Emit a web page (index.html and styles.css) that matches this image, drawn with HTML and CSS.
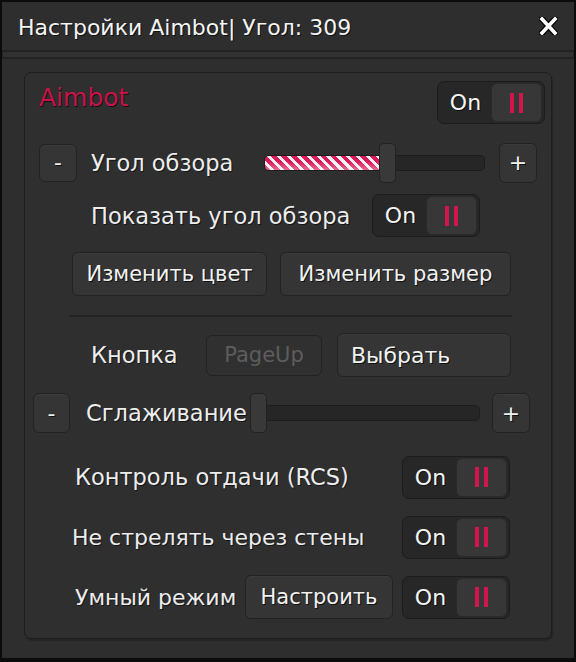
FILE: index.html
```html
<!DOCTYPE html>
<html lang="ru">
<head>
    <meta charset="UTF-8">
    <meta name="viewport" content="width=device-width, initial-scale=1.0">
    <title>Настройки Aimbot</title>
    <link rel="stylesheet" href="styles.css">
</head>
<body>
    <div class="window">
        <div class="titlebar">
            <span class="title">Настройки Aimbot| Угол: 309</span>
            <span class="close">
                <svg width="19" height="18" viewBox="0 0 19 18">
                    <path d="M3 2 L16 16 M16 2 L3 16" stroke="#000" stroke-width="6" stroke-linecap="square"/>
                    <path d="M3 2 L16 16 M16 2 L3 16" stroke="#fff" stroke-width="3.6" stroke-linecap="square"/>
                </svg>
            </span>
        </div>

        <div class="content">
            <div class="group">
                <div class="row row-head">
                    <span class="group-title">Aimbot</span>
                    <div class="toggle">
                        <span class="toggle-label">On</span>
                        <span class="knob"><i></i><i></i></span>
                    </div>
                </div>

                <div class="row row-fov">
                    <button class="btn btn-sq">-</button>
                    <span class="label">Угол обзора</span>
                    <div class="slider">
                        <div class="fill" style="width: 52%"></div>
                        <div class="thumb" style="left: 52%"></div>
                    </div>
                    <button class="btn btn-sq">+</button>
                </div>

                <div class="row row-show">
                    <span class="label">Показать угол обзора</span>
                    <div class="toggle">
                        <span class="toggle-label">On</span>
                        <span class="knob"><i></i><i></i></span>
                    </div>
                </div>

                <div class="row row-color">
                    <button class="btn btn-color">Изменить цвет</button>
                    <button class="btn btn-size">Изменить размер</button>
                </div>

                <div class="separator"></div>

                <div class="row row-key">
                    <span class="label">Кнопка</span>
                    <span class="key-box">PageUp</span>
                    <button class="btn btn-pick">Выбрать</button>
                </div>

                <div class="row row-smooth">
                    <button class="btn btn-sq">-</button>
                    <span class="label">Сглаживание</span>
                    <div class="slider">
                        <div class="thumb" style="left: -1px"></div>
                    </div>
                    <button class="btn btn-sq">+</button>
                </div>

                <div class="row row-opt">
                    <span class="label label-rcs">Контроль отдачи (RCS)</span>
                    <div class="toggle">
                        <span class="toggle-label">On</span>
                        <span class="knob"><i></i><i></i></span>
                    </div>
                </div>

                <div class="row row-opt">
                    <span class="label label-walls">Не стрелять через стены</span>
                    <div class="toggle">
                        <span class="toggle-label">On</span>
                        <span class="knob"><i></i><i></i></span>
                    </div>
                </div>

                <div class="row row-opt">
                    <span class="label label-smart">Умный режим</span>
                    <button class="btn btn-setup">Настроить</button>
                    <div class="toggle">
                        <span class="toggle-label">On</span>
                        <span class="knob"><i></i><i></i></span>
                    </div>
                </div>
            </div>
        </div>
    </div>
</body>
</html>
```

FILE: styles.css
```css
body {
    margin: 0;
    padding: 0;
    background-color: #000;
    font-family: "DejaVu Sans", Verdana, sans-serif;
    color: #ececec;
}

.window {
    width: 576px;
    height: 662px;
    box-sizing: border-box;
    border: 2px solid #0b0b0b;
    border-bottom-width: 4px;
    background-color: #2e2e2e;
}

.titlebar {
    height: 48px;
    display: flex;
    align-items: center;
    justify-content: space-between;
    padding: 0 16px 0 16px;
    border-bottom: 2px solid #232323;
    box-shadow: 0 6px 0 -1px #313131, 0 7px 0 0 #232323;
    text-shadow: 1px 1px 0 #111;
}

.title {
    font-size: 22px;
    color: #f4f4f4;
    margin-top: 2px;
}

.close {
    display: flex;
}

.content {
    padding: 20px 22px 0 22px;
}

.group {
    height: 567px;
    box-sizing: border-box;
    border: 1px solid #1e1e1e;
    border-radius: 7px;
    background-color: #2f2f2f;
    box-shadow: 1px 2px 1px #252525;
    padding-top: 7px;
}

.row {
    display: flex;
    align-items: center;
    height: 44px;
}

.label {
    font-size: 22.5px;
    color: #ededed;
    text-shadow: 1px 1px 0 #151515;
    white-space: nowrap;
}

/* header */
.row-head {
    height: 45px;
    justify-content: space-between;
    padding: 0 6px 0 14px;
}

.group-title {
    font-size: 25px;
    color: #c8134a;
    text-shadow: 1px 1px 0 #111;
    margin-top: -11px;
}

/* buttons */
.btn {
    font-family: inherit;
    font-size: 21px;
    color: #f2f2f2;
    background-color: #353535;
    border: 1px solid #222;
    border-radius: 6px;
    box-shadow: inset 0 1px 0 #3b3b3b;
    text-shadow: 1px 1px 0 #111;
    height: 44px;
    padding: 0;
    cursor: pointer;
}

.btn-sq {
    width: 38px;
    height: 40px;
    font-size: 22px;
}

/* toggle */
.toggle {
    width: 108px;
    height: 43px;
    box-sizing: border-box;
    display: flex;
    align-items: center;
    background-color: #272727;
    border: 1px solid #1c1c1c;
    border-radius: 7px;
    padding: 2px;
}

.toggle-label {
    width: 51px;
    text-align: center;
    font-size: 22px;
    color: #f4f4f4;
    text-shadow: 1px 1px 0 #111;
}

.knob {
    flex: 1;
    height: 37px;
    display: flex;
    align-items: center;
    justify-content: center;
    gap: 5px;
    background-color: #373737;
    border: 1px solid #2a2a2a;
    border-radius: 6px;
}

.knob i {
    display: block;
    width: 4px;
    height: 20px;
    background-color: #d0154c;
}

/* slider */
.slider {
    position: relative;
    height: 16px;
    box-sizing: border-box;
    background-color: #262626;
    border: 1px solid #1d1d1d;
    border-radius: 5px;
}

.fill {
    height: 100%;
    border-radius: 4px 0 0 4px;
    background-image:
        linear-gradient(to bottom, rgba(255,255,255,0) 40%, rgba(255,255,255,0.35)),
        repeating-linear-gradient(45deg, #d81a5a 0 4px, #fbeef2 4px 7px);
}

.thumb {
    position: absolute;
    top: -13px;
    width: 17px;
    height: 40px;
    box-sizing: border-box;
    background-color: #393939;
    border: 1px solid #222;
    border-radius: 5px;
}

/* row: fov */
.row-fov {
    margin-top: 16px;
    height: 43px;
}

.row-fov .btn-sq:first-child {
    margin-left: 14px;
    height: 38px;
}

.row-fov .label {
    margin-left: 14px;
    width: 173px;
}

.row-fov .slider {
    width: 221px;
}

.row-fov .btn-sq:last-child {
    margin-left: 14px;
}

/* row: show fov */
.row-show {
    margin-top: 10px;
    height: 43px;
}

.row-show .label {
    margin-left: 66px;
    width: 281px;
}

/* row: colour / size */
.row-color {
    margin-top: 15px;
}

.btn-color {
    margin-left: 47px;
    width: 195px;
}

.btn-size {
    margin-left: 13px;
    width: 231px;
}

.separator {
    margin: 19px 39px 0 44px;
    height: 2px;
    background-color: #232323;
}

/* row: key */
.row-key {
    margin-top: 16px;
}

.row-key .label {
    margin-left: 66px;
    width: 115px;
}

.key-box {
    width: 116px;
    height: 41px;
    box-sizing: border-box;
    display: flex;
    align-items: center;
    justify-content: center;
    font-size: 21px;
    color: #5d5d5d;
    background-color: #303030;
    border: 1px solid #222;
    border-radius: 6px;
}

.btn-pick {
    margin-left: 15px;
    width: 174px;
    text-align: left;
    padding-left: 13px;
    font-size: 22px;
}

/* row: smoothing */
.row-smooth {
    margin-top: 14px;
}

.row-smooth .btn-sq:first-child {
    margin-left: 8px;
    width: 37px;
}

.row-smooth .label {
    margin-left: 16px;
    width: 164px;
}

.row-smooth .slider {
    width: 230px;
}

.row-smooth .btn-sq:last-child {
    margin-left: 12px;
}

/* rows: options */
.row-opt {
    margin-top: 16px;
    height: 44px;
}

.row-opt .toggle {
    margin-left: auto;
    margin-right: 41px;
}

.label-rcs {
    margin-left: 50px;
}

.label-walls {
    margin-left: 47px;
    font-size: 22px;
}

.label-smart {
    margin-left: 50px;
    width: 170px;
    font-size: 22px;
}

.btn-setup {
    width: 148px;
}

.row-smooth + .row-opt {
    margin-top: 20px;
}
```
